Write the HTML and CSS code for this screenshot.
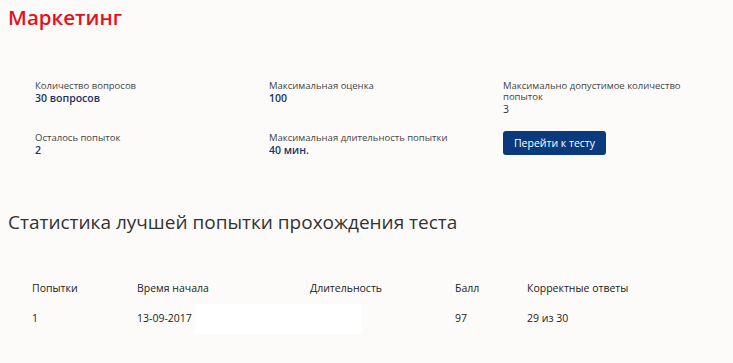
FILE: index.html
```html
<!DOCTYPE html>
<html lang="ru">
<head>
    <meta charset="UTF-8">
    <meta name="viewport" content="width=device-width, initial-scale=1.0">
    <title>Маркетинг</title>
    <link rel="stylesheet" href="styles.css">
</head>
<body>

    <!-- Course title -->
    <h1 class="title">Маркетинг</h1>

    <!-- Test details -->
    <div class="info">
        <div class="info-item">
            <div class="label">Количество вопросов</div>
            <div class="value">30 вопросов</div>
        </div>
        <div class="info-item">
            <div class="label">Максимальная оценка</div>
            <div class="value">100</div>
        </div>
        <div class="info-item">
            <div class="label">Максимально допустимое количество попыток</div>
            <div class="value plain">3</div>
        </div>
        <div class="info-item">
            <div class="label">Осталось попыток</div>
            <div class="value">2</div>
        </div>
        <div class="info-item">
            <div class="label">Максимальная длительность попытки</div>
            <div class="value">40 мин.</div>
        </div>
        <div class="info-item">
            <button class="btn">Перейти к тесту</button>
        </div>
    </div>

    <!-- Best attempt -->
    <h2 class="stats-title">Статистика лучшей попытки прохождения теста</h2>

    <table class="stats">
        <thead>
            <tr>
                <th class="col-attempt">Попытки</th>
                <th class="col-start">Время начала</th>
                <th class="col-duration">Длительность</th>
                <th class="col-score">Балл</th>
                <th>Корректные ответы</th>
            </tr>
        </thead>
        <tbody>
            <tr>
                <td>1</td>
                <td class="start-cell">13-09-2017<span class="hidden-box"></span></td>
                <td></td>
                <td>97</td>
                <td>29 из 30</td>
            </tr>
        </tbody>
    </table>

</body>
</html>
```

FILE: styles.css
```css
/* Page */
body {
    margin: 0;
    padding: 0 8px;
    background: #fcfbf9;
    font-family: 'Open Sans', sans-serif;
    color: #333;
    height: 363px;
    overflow: hidden;
}

.title {
    margin: 0;
    padding-top: 3px;
    font-size: 20.5px;
    font-weight: 600;
    color: #e8101e;
    line-height: 28px;
}

/* Info grid */
.info {
    display: grid;
    grid-template-columns: 234px 234px 210px;
    row-gap: 14px;
    margin: 49px 0 0 27px;
}

.info-item {
    min-height: 38px;
}

.label {
    font-size: 9.5px;
    line-height: 11px;
    color: #444;
    max-width: 200px;
}

.value {
    font-size: 10.5px;
    font-weight: 600;
    line-height: 14px;
    color: #1a3264;
}

.value.plain {
    font-weight: 400;
    color: #333;
}

.btn {
    display: block;
    margin-top: -1px;
    background: #0a3a7e;
    color: #fff;
    border: none;
    border-radius: 3px;
    padding: 0;
    width: 103px;
    height: 24px;
    font-family: 'Open Sans', sans-serif;
    font-size: 10.5px;
    cursor: pointer;
}

/* Statistics */
.stats-title {
    margin: 39px 0 0;
    font-size: 19px;
    font-weight: 400;
    color: #333;
    line-height: 26px;
}

.stats {
    margin: 46px 0 0 24px;
    border-collapse: collapse;
    font-size: 10.5px;
    color: #222;
}

.stats th {
    font-weight: 400;
    text-align: left;
    padding: 0 0 16px;
}

.stats td {
    padding: 0;
}

.col-attempt { width: 105px; }
.col-start { width: 173px; }
.col-duration { width: 145px; }
.col-score { width: 72px; }

.start-cell {
    position: relative;
}

/* white block over the hidden time */
.hidden-box {
    position: absolute;
    left: 58px;
    top: -7px;
    width: 167px;
    height: 30px;
    background: #fff;
}
```
